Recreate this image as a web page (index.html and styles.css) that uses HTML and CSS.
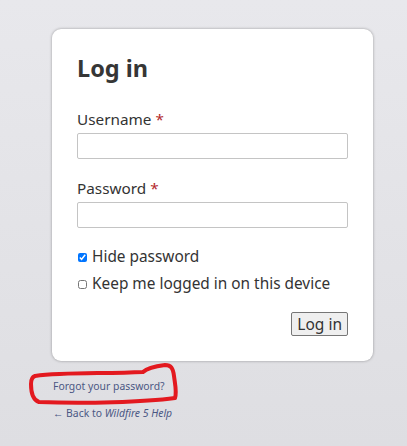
FILE: index.html
```html
<!DOCTYPE html>
<html>
<head>
<meta charset="utf-8">
<link rel="stylesheet" href="styles.css">
</head>
<body>
<main class="page">
  <form class="card">
    <h1 class="title">Log in</h1>
    <label class="label" for="u">Username <span class="req">*</span></label>
    <input class="field" id="u" type="text">
    <label class="label" for="p">Password <span class="req">*</span></label>
    <input class="field" id="p" type="password">
    <label class="check"><input type="checkbox" checked> Hide password</label>
    <label class="check"><input type="checkbox"> Keep me logged in on this device</label>
    <div class="actions"><button type="button" class="btn">Log in</button></div>
  </form>
  <div class="links">
    <a class="link" href="#">Forgot your password?</a>
    <a class="link" href="#">&larr; Back to <em>Wildfire 5 Help</em></a>
  </div>
  <svg class="scribble" width="160" height="50" viewBox="0 0 160 50">
    <path d="M10 14 C40 10 80 12 118 10 C122 6 132 4 140 3 C146 3 148 6 149 14 C150 22 152 30 150 36 C120 40 60 42 14 40 C8 38 6 30 6 22 C6 18 7 15 10 14 Z" fill="none" stroke="#e3191f" stroke-width="4" stroke-linejoin="round"/>
  </svg>
</main>
</body>
</html>
```
FILE: styles.css
```css
html, body { margin: 0; }
body {
  background: linear-gradient(#e8e8ec, #dedee2);
  font-family: "Noto Sans", sans-serif;
  color: #333;
  height: 446px;
  overflow: hidden;
}
.page {
  position: relative;
  padding: 29px 0 0 52px;
}
.card {
  box-sizing: border-box;
  width: 321px;
  background: #fff;
  border-radius: 9px;
  box-shadow: 0 0 3px rgba(0,0,0,0.35);
  padding: 23px 25px 25px 25px;
  display: flex;
  flex-direction: column;
}
.title {
  margin: 0 0 23px 0;
  font-size: 23.5px;
  line-height: 32px;
  font-weight: 700;
  color: #363636;
}
.label {
  font-size: 15.3px;
  line-height: 24px;
  margin-bottom: 2px;
}
.req { color: #b3262b; }
.field {
  box-sizing: border-box;
  height: 26px;
  width: 100%;
  border: 1px solid #c4c4c4;
  border-radius: 2px;
  margin: 0 0 17px 0;
}
#p { margin-bottom: 17px; }
.check {
  font-size: 15.4px;
  line-height: 24px;
  display: flex;
  align-items: center;
  margin-bottom: 3px;
}
.check input {
  margin: 0 5px 0 1px;
  width: 9px;
  height: 9px;
}
.actions {
  display: flex;
  justify-content: flex-end;
  margin-top: 13px;
}
.btn {
  font-family: "Noto Sans", sans-serif;
  font-size: 15.5px;
  line-height: 20px;
  height: 24px;
  padding: 0 5px;
  background: #efefef;
  border: 1px solid #767676;
  border-radius: 2px;
  color: #333;
}
.links {
  display: flex;
  flex-direction: column;
  gap: 11px;
  padding: 17px 0 0 1px;
}
.link {
  font-size: 10.4px;
  line-height: 16px;
  color: #4b5783;
  text-decoration: none;
}
.scribble {
  position: absolute;
  left: 25px;
  top: 362px;
}
```
